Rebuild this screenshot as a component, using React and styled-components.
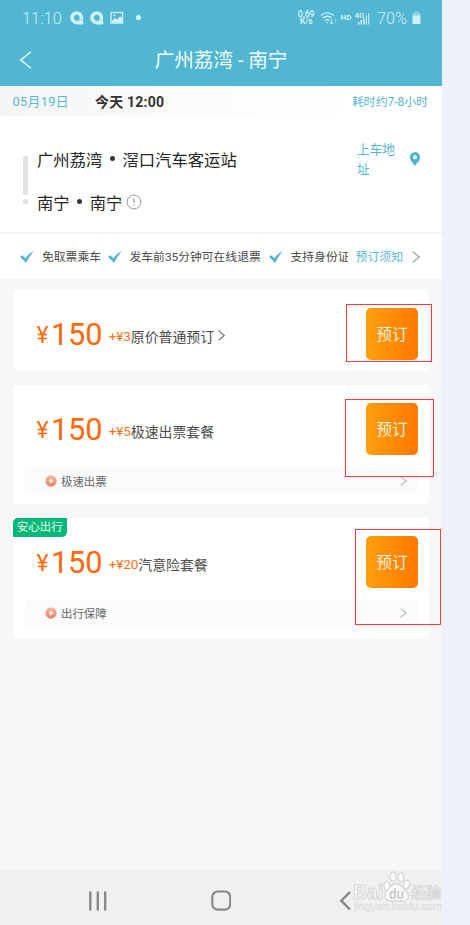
import React from 'react';
import styled, { createGlobalStyle } from 'styled-components';

const GlobalStyle = createGlobalStyle`
  * { box-sizing: border-box; }
  html, body { margin: 0; padding: 0; }
  body {
    background: #edf1fa;
    font-family: Roboto, "Noto Sans CJK SC", sans-serif;
    overflow: hidden;
  }
`;

const Page = styled.div`
  position: relative;
  width: 470px;
  height: 925px;
  background: #edf1fa;
  white-space: nowrap;
`;

const Phone = styled.div`
  width: 442px;
  height: 925px;
  display: flex;
  flex-direction: column;
  background: #f7f7f7;
`;

const Header = styled.header`
  height: 86px;
  flex: none;
  background: #50b6d1;
  color: #f4fdff;
`;

const StatusBar = styled.div`
  height: 36px;
  display: flex;
  align-items: center;
  padding: 0 20px 0 22px;
  color: #d0f1f6;
`;

const Clock = styled.span`
  width: 48px;
  padding-top: 1px;
  font-size: 16.4px;
  font-weight: 300;
  line-height: 36px;
`;

const StatusIcons = styled.div`
  display: flex;
  flex: 1;
`;

const Speed = styled.div`
  width: 23px;
  font-size: 8.8px;
  font-weight: 600;
  line-height: 7.5px;
  letter-spacing: -0.3px;
  text-align: center;
  white-space: pre;
`;

const Hd = styled.span`
  margin-left: 3px;
  width: 14px;
  font-size: 8px;
  font-weight: 700;
  line-height: 36px;
`;

const Percent = styled.span`
  width: 33px;
  margin-left: 7.5px;
  padding-top: 1px;
  font-size: 16.2px;
  font-weight: 300;
  line-height: 36px;
`;

const BatteryIcon = styled.svg`
  width: 9px;
  height: 14px;
  margin: 0 1px 0 2px;
`;

const TitleBar = styled.div`
  height: 46px;
  display: grid;
  grid-template-columns: 40px 1fr 40px;
  align-items: center;
`;

const BackIcon = styled.svg`
  width: 14px;
  height: 18px;
  margin-left: 19px;
`;

const Title = styled.h1`
  margin: 0;
  padding-top: 2px;
  font-size: 19.6px;
  font-weight: 400;
  line-height: 46px;
  text-align: center;
`;

const DateRow = styled.div`
  height: 30px;
  flex: none;
  display: flex;
  align-items: center;
  padding: 1px 14px 0 12.5px;
  background: linear-gradient(90deg, #f5f5f5, #fcfcfc 45%, #ffffff 80%);
  line-height: 30px;
`;

const DateText = styled.span`
  width: 82.5px;
  color: #56b9d1;
  font-size: 12.8px;
  letter-spacing: 0.35px;
`;

const Departure = styled.strong`
  flex: 1;
  color: #333;
  font-size: 14px;
  font-weight: 700;
  letter-spacing: 0.2px;
`;

const Duration = styled.span`
  color: #56b9d1;
  font-size: 11.9px;
`;

const RouteSection = styled.section`
  height: 118px;
  flex: none;
  display: flex;
  background: #fff;
  border-bottom: 2px solid #f3f3f3;
  padding-left: 23px;
`;

const RouteLine = styled.div`
  width: 5px;
  margin: 40px 9px 0 0;
  display: flex;
  flex-direction: column;
  gap: 4px;
`;

const LinePart = styled.i`
  height: ${(p) => p.$height}px;
  border-radius: 1.5px;
  background: #e2e2e2;
`;

const Stops = styled.div`
  width: 320px;
  padding-top: 21px;
  color: #262626;
  font-size: 16.35px;
`;

const Stop = styled.div`
  height: 43px;
  display: flex;
  align-items: center;
`;

const Dot = styled.i`
  width: 5px;
  height: 5px;
  margin: 0 7.5px;
  border-radius: 50%;
  background: #333;
`;

const InfoIcon = styled.svg`
  width: 16px;
  height: 16px;
  margin-left: 4px;
`;

const Address = styled.div`
  width: 52px;
  padding-top: 24px;
  color: #56b9d1;
  font-size: 12.7px;
  line-height: 20px;
`;

const PinIcon = styled.svg`
  width: 12px;
  height: 16px;
  margin-top: 35px;
`;

const BenefitRow = styled.section`
  height: 45px;
  flex: none;
  display: flex;
  align-items: center;
  background: #fff;
  padding: 2px 0 0 20px;
  border-bottom: 1px solid #fafafa;
  line-height: 42px;
`;

const Benefits = styled.div`
  width: 328px;
  display: flex;
  align-items: center;
  overflow: hidden;
  color: #4a4a4a;
  font-size: 11.8px;
`;

const Benefit = styled.span`
  flex: none;
  width: ${(p) => p.$width}px;
  display: flex;
  align-items: center;
  gap: 8px;
`;

const Notice = styled.a`
  margin-left: 7.5px;
  width: 56.5px;
  color: #56b9d1;
  font-size: 11.9px;
`;

const List = styled.main`
  flex: 1;
  display: flex;
  flex-direction: column;
  gap: 14px;
  padding: 11.4px 12.6px 0 12.5px;
`;

const Card = styled.article`
  height: ${(p) => p.$height}px;
  position: relative;
  background: #fff;
  border-radius: 5px;
  padding: 17.4px 11.4px 0 12px;
`;

const Tag = styled.span`
  position: absolute;
  left: 0;
  top: 0;
  width: 54.5px;
  height: 18.5px;
  border-radius: 5px 0 5px 0;
  background: #05b878;
  color: #f2fff9;
  font-size: 11.4px;
  line-height: 19px;
  text-align: center;
`;

const Offer = styled.div`
  height: 52px;
  display: flex;
  align-items: center;
  padding-left: 12px;
`;

const Price = styled.div`
  display: flex;
  align-items: baseline;
  width: 72.2px;
  padding-top: 6px;
  color: #ff6a0a;
  font-size: 30.8px;
  line-height: 52px;
  letter-spacing: -0.2px;
`;

const Yen = styled.span`
  width: 14.5px;
  font-size: 23px;
  transform: translateY(-2.5px);
`;

const Extra = styled.span`
  padding-top: 5px;
  color: #f9741b;
  font-size: 13.6px;
  letter-spacing: -0.15px;
`;

const Package = styled.span`
  flex: 1;
  padding-top: 4px;
  display: flex;
  align-items: center;
  color: #4a4a4a;
  font-size: 13.9px;
`;

const Book = styled.button`
  width: 52px;
  height: 52px;
  padding: 2px 0 0;
  border: 0;
  border-radius: 5px;
  background: linear-gradient(90deg, #ff9f0d, #ff7800);
  color: #fff2df;
  font-family: inherit;
  font-size: 15.7px;
  line-height: 50px;
`;

const Service = styled.div`
  height: 25.5px;
  margin-top: 12.5px;
  display: flex;
  align-items: center;
  padding: 1px 11px 0 20.5px;
  background: #fbfbfb;
  border-radius: 3px;
  color: #666;
  font-size: 11.4px;
`;

const ServiceIcon = styled.svg`
  width: 12px;
  height: 12px;
  margin-right: 4px;
`;

const ServiceName = styled.span`
  flex: 1;
`;

const NavBar = styled.nav`
  height: 55px;
  flex: none;
  display: flex;
  align-items: center;
  padding: 6px 0 0 88px;
  background: #f0f0f0;
`;

const Key = styled.svg`
  width: 20px;
  height: 22px;
  margin-right: ${(p) => p.$gap}px;
`;

const Highlight = styled.div`
  position: absolute;
  left: ${(p) => p.$x}px;
  top: ${(p) => p.$y}px;
  width: ${(p) => p.$w}px;
  height: ${(p) => p.$h}px;
  border: 1px solid #fb3838;
`;

const Watermark = styled.svg`
  position: absolute;
  left: 350px;
  top: 868px;
  width: 92px;
  height: 50px;
`;

function Chevron({ w = 7, h = 11, color = '#999', ml = 0 }) {
  return (
    <svg width={w + ml} height={h} viewBox={`${-ml} 0 ${w + ml} ${h}`} fill="none" stroke={color} strokeWidth="1.1">
      <path d={`M.6.6 L${w - 0.7} ${h / 2} L.6 ${h - 0.6}`} />
    </svg>
  );
}

function Check() {
  return (
    <svg width="14" height="12" viewBox="0 0 14 12" fill="#4db5d1">
      <path d="M0 6 2.200 4.200 5.200 7.200Q9 2.200 13.900 0 9.300 5 6 12 3.500 8.800 0 6Z" />
    </svg>
  );
}

function ChatIcon() {
  return (
    <svg width="20" height="14" viewBox="0 0 20 14">
      <circle cx="6.700" cy="6.700" r="4.700" fill="none" stroke="currentColor" strokeWidth="3.600" />
      <path d="M7 13.500a1.900 1.900 0 0 1 .3-3.700q1-.3 1.800.3.900-2 2.800-1.300 1.400.7 1.300 2.200.9 2.400-1 2.500Z" fill="currentColor" />
      <path d="M5.800 11.200q.8-2 3-1.500.8-1.600 2.800-1.400" fill="none" stroke="#50b6d1" strokeWidth=".5" />
    </svg>
  );
}

function StatusLine() {
  return (
    <StatusBar>
      <Clock>11:10</Clock>
      <StatusIcons>
        <ChatIcon />
        <ChatIcon />
        <svg width="14" height="14" viewBox="0 0 14 14" fill="none" stroke="currentColor">
          <rect x="1" y="1.500" width="11.600" height="10.600" strokeWidth="1.300" />
          <path d="M2 9.500 5 7l2 1.500 3.300-3.200L12 7v4.700H2Z" fill="currentColor" stroke="none" />
          <circle cx="4.300" cy="4.300" r="1" fill="currentColor" stroke="none" />
        </svg>
        <svg width="20" height="14" viewBox="0 0 20 14"><circle cx="14.400" cy="6.500" r="2.600" fill="currentColor" /></svg>
      </StatusIcons>
      <Speed>{'0.69\nK/s'}</Speed>
      <svg width="20" height="14" viewBox="-1 0 20 14" fill="none" stroke="currentColor" strokeWidth="1.300">
        <path d="M1.800 4.500q6.500-5.200 13 0M4 7q4.300-3.500 8.600 0M6 9.500q2.300-1.700 4.300 0" />
        <circle cx="8.200" cy="11.500" r=".8" fill="currentColor" stroke="none" />
        <path d="M12.500 8.500v4.500m-1.500-1.700 1.500 1.700 1.500-1.700" strokeWidth="1" />
        <path d="M16.300 12.500V7.700m-1.300 1.600 1.300-1.600 1.300 1.600" strokeWidth=".8" opacity=".4" />
      </svg>
      <Hd>HD</Hd>
      <svg width="15" height="14" viewBox="0.500 0 15 14" fill="currentColor">
        <text x="0" y="6.500" fontSize="8" fontWeight="600" fontFamily="Roboto">4G</text>
        <path d="M3.500 11h1.500v2.500H3.500ZM6 9h1.600v4.500H6ZM8.700 7.500h1.600v6H8.700ZM11.400 4.500h1v9h-1ZM13.700 2h1.100v11.500h-1.100Z" />
      </svg>
      <Percent>70%</Percent>
      <BatteryIcon viewBox="0 0 9 14" fill="currentColor">
        <path d="M2.500.5h4v1.500h1.300q.7 0 .7.800v2.200H.5V2.800q0-.8.700-.8h1.300Z" opacity=".45" />
        <path d="M.5 4.500h8v7.700q0 .8-.8.800H1.300q-.8 0-.8-.8Z" />
      </BatteryIcon>
    </StatusBar>
  );
}

const offers = [
  { extra: '+¥3', name: '原价普通预订', height: 81, arrow: true },
  { extra: '+¥5', name: '极速出票套餐', height: 118.8, service: '极速出票' },
  { extra: '+¥20', name: '汽意险套餐', height: 119.5, service: '出行保障', tag: '安心出行' },
];

function OfferCard({ offer }) {
  return (
    <Card $height={offer.height}>
      {offer.tag && <Tag>{offer.tag}</Tag>}
      <Offer>
        <Price><Yen>¥</Yen>150</Price>
        <Extra>{offer.extra}</Extra>
        <Package>
          {offer.name}
          {offer.arrow && <Chevron w={7} h={11} ml={4} color="#666" />}
        </Package>
        <Book>预订</Book>
      </Offer>
      {offer.service && (
        <Service>
          <ServiceIcon viewBox="0 0 12 12">
            <defs>
              <linearGradient id="coral" x1="0" y1="0" x2="0" y2="1">
                <stop stopColor="#f5b9a4" />
                <stop offset="1" stopColor="#e88364" />
              </linearGradient>
            </defs>
            <circle cx="6" cy="6" r="5.700" fill="url(#coral)" />
            <path d="M6.700 2.900 3.200 6.600h2.200L5 9.100l3.900-3.700H6.600Z" fill="#fff3ee" />
          </ServiceIcon>
          <ServiceName>{offer.service}</ServiceName>
          <Chevron w={7} h={10} color="#bbb" />
        </Service>
      )}
    </Card>
  );
}

export default function App() {
  return (
    <>
      <GlobalStyle />
      <Page>
        <Phone>
          <Header>
            <StatusLine />
            <TitleBar>
              <BackIcon viewBox="0 0 14 18" fill="none" stroke="currentColor" strokeWidth="1.400">
                <path d="M12 .8 1.700 9 12 17.200" />
              </BackIcon>
              <Title>广州荔湾 - 南宁</Title>
            </TitleBar>
          </Header>
          <DateRow>
            <DateText>05月19日</DateText>
            <Departure>今天 12:00</Departure>
            <Duration>耗时约7-8小时</Duration>
          </DateRow>
          <RouteSection>
            <RouteLine>
              <LinePart $height={39} />
              <LinePart $height={5} />
            </RouteLine>
            <Stops>
              <Stop>广州荔湾<Dot />滘口汽车客运站</Stop>
              <Stop>
                南宁<Dot />南宁
                <InfoIcon viewBox="0 0 16 16" fill="none" stroke="#999">
                  <circle cx="8" cy="8" r="6.900" />
                  <path d="M8 4v5M8 10.500v1.300" strokeWidth="1.200" />
                </InfoIcon>
              </Stop>
            </Stops>
            <Address>上车地<br />址</Address>
            <PinIcon viewBox="0 0 12 16" fill="#4db5d1" fillRule="evenodd">
              <path d="M6 1a5.100 5.100 0 0 0-5.100 5.200C.9 9.500 4 12.200 6 14.800 8 12.200 11.100 9.500 11.100 6.200A5.100 5.100 0 0 0 6 1Zm0 3.200a2 2 0 1 1 0 4 2 2 0 0 1 0-4Z" />
            </PinIcon>
          </RouteSection>
          <BenefitRow>
            <Benefits>
              <Benefit $width={87.5}><Check />免取票乘车</Benefit>
              <Benefit $width={161}><Check />发车前35分钟可在线退票</Benefit>
              <Benefit $width={120}><Check />支持身份证</Benefit>
            </Benefits>
            <Notice>预订须知</Notice>
            <Chevron w={8} h={12} />
          </BenefitRow>
          <List>
            {offers.map((offer) => <OfferCard key={offer.name} offer={offer} />)}
          </List>
          <NavBar>
            <Key $gap={103} viewBox="0 0 20 22" stroke="#888" strokeWidth="2.400" strokeLinecap="round">
              <path d="M2.300 2.500v17M9.800 2.500v17M17.200 2.500v17" />
            </Key>
            <Key $gap={106} viewBox="0 0 20 22" fill="none" stroke="#888" strokeWidth="2.200">
              <rect x="1.300" y="1.500" width="18" height="18.200" rx="5.500" />
            </Key>
            <Key $gap={0} viewBox="0 0 20 22" fill="none" stroke="#888" strokeWidth="2.400">
              <path d="M13 2 4.300 10.700 13 19.500" />
            </Key>
          </NavBar>
        </Phone>
        <Highlight $x={346} $y={304} $w={86} $h={58} />
        <Highlight $x={345} $y={399} $w={89} $h={78} />
        <Highlight $x={355} $y={529} $w={86} $h={96} />
        <Watermark viewBox="0 0 92 50" fill="#fafafa" stroke="#d6d6d6" strokeWidth="1.300" fontFamily="Liberation Sans, Noto Sans CJK SC, sans-serif">
          <text x="3" y="31" fontSize="20" fontWeight="700" textLength="30" lengthAdjust="spacingAndGlyphs" strokeWidth="1">Bai</text>
          <ellipse cx="37" cy="18" rx="3" ry="4.500" transform="rotate(-15 37 18)" />
          <ellipse cx="43" cy="8.500" rx="3" ry="4.700" />
          <ellipse cx="51" cy="9" rx="3" ry="4.700" />
          <ellipse cx="56.500" cy="16.500" rx="3" ry="4.500" transform="rotate(20 56.500 16.500)" />
          <path d="M46 15.500C41 15.500 40 20 37 23c-4 4-2 10 3 10h13c6 0 7-7 3-10-3-3-5-7.500-10-7.500Z" />
          <text x="39" y="31" fontSize="15" fontWeight="700" fill="#c8c8c8" stroke="none" textLength="15" lengthAdjust="spacingAndGlyphs">du</text>
          <text x="61" y="30" fontSize="15" fontWeight="700" textLength="30" lengthAdjust="spacingAndGlyphs" strokeWidth=".9">经验</text>
          <text x="4" y="42" fontSize="10" fill="#f4f4f4" stroke="#dedede" strokeWidth=".6" textLength="88" lengthAdjust="spacingAndGlyphs">jingyan.baidu.com</text>
        </Watermark>
      </Page>
    </>
  );
}
